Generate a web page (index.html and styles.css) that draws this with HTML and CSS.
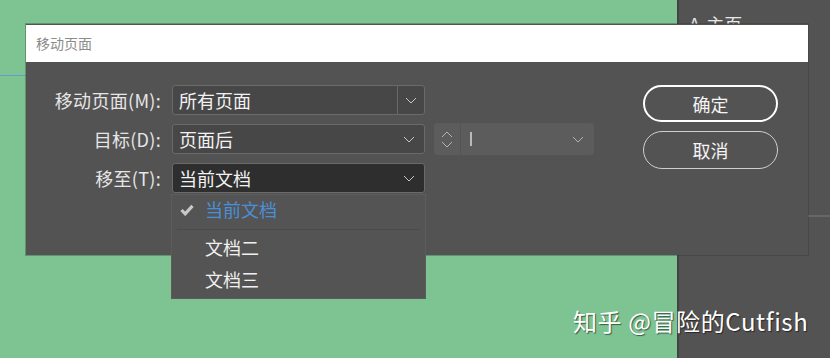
FILE: index.html
```html
<!DOCTYPE html>
<html lang="zh-CN">
<head>
    <meta charset="UTF-8">
    <meta name="viewport" content="width=device-width, initial-scale=1.0">
    <title>移动页面</title>
    <link rel="stylesheet" href="styles.css">
</head>
<body>
<div class="workspace">
    <div class="canvas">
        <div class="guide"></div>
    </div>
    <div class="panel">
        <div class="panel-title">A-主页</div>
        <div class="panel-rule"></div>
    </div>
</div>

<!-- Move pages dialog -->
<div class="dialog">
    <div class="titlebar">移动页面</div>
    <div class="dialog-body">
        <div class="form">
            <label class="label">移动页面(M):</label>
            <div class="select has-split">
                <span class="value">所有页面</span>
                <span class="split">
                    <svg width="12" height="7" viewBox="0 0 12 7"><polyline points="1,1 6,6 11,1" fill="none" stroke="#c8c8c8" stroke-width="1"/></svg>
                </span>
            </div>
            <div></div>

            <label class="label">目标(D):</label>
            <div class="select">
                <span class="value">页面后</span>
                <svg width="12" height="7" viewBox="0 0 12 7"><polyline points="1,1 6,6 11,1" fill="none" stroke="#c8c8c8" stroke-width="1"/></svg>
            </div>
            <div class="spinner">
                <span class="steps">
                    <svg width="12" height="7" viewBox="0 0 12 7"><polyline points="1,6 6,1 11,6" fill="none" stroke="#b4b4b4" stroke-width="1"/></svg>
                    <svg width="12" height="7" viewBox="0 0 12 7"><polyline points="1,1 6,6 11,1" fill="none" stroke="#b4b4b4" stroke-width="1"/></svg>
                </span>
                <span class="caret"></span>
                <svg class="spin-arrow" width="12" height="7" viewBox="0 0 12 7"><polyline points="1,1 6,6 11,1" fill="none" stroke="#b4b4b4" stroke-width="1"/></svg>
            </div>

            <label class="label">移至(T):</label>
            <div class="select is-open">
                <span class="value">当前文档</span>
                <svg width="12" height="7" viewBox="0 0 12 7"><polyline points="1,1 6,6 11,1" fill="none" stroke="#c8c8c8" stroke-width="1"/></svg>
                <ul class="menu">
                    <li class="menu-item checked">
                        <svg class="check" width="14" height="12" viewBox="0 0 14 12"><path d="M1.5 6 L5.2 9.8 L12.5 1.8" fill="none" stroke="#c9c9c9" stroke-width="3.2"/></svg>
                        当前文档
                    </li>
                    <li class="menu-sep"></li>
                    <li class="menu-item">文档二</li>
                    <li class="menu-item">文档三</li>
                </ul>
            </div>
            <div></div>
        </div>
        <div class="actions">
            <button class="btn btn-primary">确定</button>
            <button class="btn">取消</button>
        </div>
    </div>
</div>

<div class="watermark">知乎 @冒险的Cutfish</div>
</body>
</html>
```

FILE: styles.css
```css
/* General */
body {
    margin: 0;
    font-family: "Noto Sans CJK SC", "Liberation Sans", sans-serif;
    overflow: hidden;
}

/* Background app */
.workspace {
    display: flex;
    height: 358px;
}

.canvas {
    position: relative;
    width: 677px;
    background: #7dc492;
}

.guide {
    position: absolute;
    left: 0;
    width: 40px;
    top: 75px;
    height: 1px;
    background: #5d9fcf;
}

.panel {
    flex: 1;
    background: #535353;
    border-left: 2px solid #434343;
}

.panel-title {
    padding: 12px 0 0 10px;
    color: #e8e8e8;
    font-size: 18px;
    line-height: 24px;
}

.panel-rule {
    margin: 179px 0 0 129px;
    height: 2px;
    background: #676767;
}

/* Dialog */
.dialog {
    position: absolute;
    left: 26px;
    top: 24px;
    width: 782px;
    background: #535353;
    box-shadow: 0 0 0 1px rgba(40, 60, 45, 0.35);
}

.titlebar {
    height: 37px;
    margin-top: 1px;
    padding-left: 10px;
    background: #fff;
    color: #8c8c8c;
    font-size: 14px;
    line-height: 37px;
}

.dialog-body {
    display: flex;
    height: 170px;
    padding-top: 23px;
}

.form {
    display: grid;
    grid-template-columns: 135px 253px 160px;
    grid-auto-rows: 30px;
    column-gap: 11px;
    row-gap: 9px;
    align-items: center;
}

.label {
    text-align: right;
    color: #e6e6e6;
    font-size: 18px;
    line-height: 30px;
    letter-spacing: 0.3px;
}

.select {
    position: relative;
    display: flex;
    align-items: center;
    box-sizing: border-box;
    height: 30px;
    padding: 0 9px 0 6px;
    background: #474747;
    border: 1px solid #6a6a6a;
    border-radius: 3px;
}

.select .value {
    flex: 1;
    color: #f2f2f2;
    font-size: 18px;
    line-height: 28px;
}

.has-split {
    padding-right: 0;
}

.split {
    display: flex;
    align-items: center;
    justify-content: center;
    width: 26px;
    height: 28px;
    border-left: 1px solid #686868;
}

.is-open {
    background: #2e2e2e;
}

/* Number spinner */
.spinner {
    display: flex;
    align-items: center;
    height: 32px;
    margin: 0 2px 0 -2px;
    background: #5c5c5c;
    border-radius: 3px;
}

.steps {
    display: flex;
    flex-direction: column;
    align-items: center;
    gap: 3px;
    width: 26px;
    height: 32px;
    justify-content: center;
    border-right: 1px solid #535353;
}

.caret {
    width: 2px;
    height: 14px;
    margin-left: 9px;
    background: #b9b9b9;
}

.spin-arrow {
    margin-left: auto;
    margin-right: 10px;
}

/* Dropdown list */
.menu {
    position: absolute;
    left: -2px;
    top: 30px;
    width: 255px;
    margin: 0;
    padding: 0 0 1px;
    list-style: none;
    background: #545454;
    border: 1px solid #5c5c5c;
    box-sizing: border-box;
    z-index: 2;
}

.menu-item {
    height: 32px;
    padding-left: 33px;
    color: #f0f0f0;
    font-size: 18px;
    line-height: 29px;
    position: relative;
}

.checked {
    color: #4a90d9;
}

.check {
    position: absolute;
    left: 8px;
    top: 9px;
}

.menu-sep {
    height: 1px;
    margin: 2px 5px 3px;
    background: #4a4a4a;
}

/* Buttons */
.actions {
    display: flex;
    flex-direction: column;
    gap: 9px;
    margin-left: 47px;
}

.btn {
    width: 135px;
    height: 38px;
    padding: 0;
    background: transparent;
    border: 1px solid #cfcfcf;
    border-radius: 19px;
    color: #f4f4f4;
    font-family: inherit;
    font-size: 18px;
}

.btn-primary {
    height: 37px;
    border: 2px solid #fff;
}

/* Watermark */
.watermark {
    position: absolute;
    left: 573px;
    top: 304px;
    color: #fff;
    font-size: 24px;
    line-height: 34px;
    letter-spacing: 0.6px;
    text-shadow: 1px 1px 1px rgba(0, 0, 0, 0.55);
}
```
